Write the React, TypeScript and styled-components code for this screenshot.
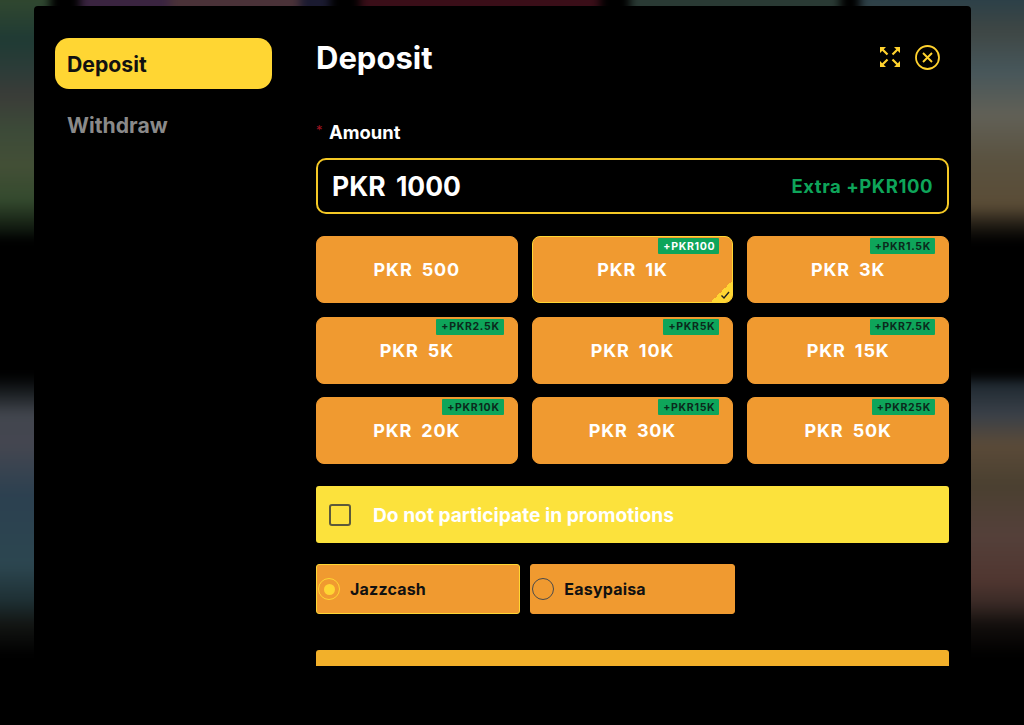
import styled, { createGlobalStyle } from 'styled-components'

const GlobalStyle = createGlobalStyle`
  html, body {
    margin: 0;
    height: 100%;
    overflow: hidden;
    background: #000;
    font-family: Inter, "Liberation Sans", sans-serif;
  }
`

const Backdrop = styled.div`
  position: absolute;
  inset: -20px -20px 0;
  display: flex;
  flex-direction: column;
  gap: 135px;
  overflow: hidden;
`

const TileRow = styled.div<{ $height: number; $spread?: boolean }>`
  display: flex;
  justify-content: ${(props) => (props.$spread ? 'space-between' : 'flex-start')};
  height: ${(props) => props.$height}px;
  filter: blur(5px);
  flex-shrink: 0;
`

const Tile = styled.div<{ $width: number; $bg: string }>`
  flex: 0 0 ${(props) => props.$width}px;
  background: ${(props) => props.$bg};
`

const Modal = styled.div`
  position: relative;
  display: flex;
  box-sizing: border-box;
  width: 937px;
  height: 719px;
  margin: 6px 0 0 34px;
  padding: 32px 22px 0 21px;
  background: #000;
  border-radius: 4px;
`

const Aside = styled.aside`
  flex: 0 0 217px;
  margin-right: 44px;
`

const AsideItem = styled.div<{ $active?: boolean }>`
  display: flex;
  align-items: center;
  height: 51px;
  padding-left: 12px;
  margin-bottom: 10px;
  border-radius: 14px;
  font-size: 21.2px;
  font-weight: 700;
  background: ${(props) => (props.$active ? '#ffd633' : 'transparent')};
  color: ${(props) => (props.$active ? '#111' : '#8a8a8a')};
`

const Main = styled.main`
  flex: 1;
  height: 628px;
  overflow: hidden;
`

const Header = styled.div`
  display: flex;
  align-items: center;
  justify-content: space-between;
  height: 38px;
`

const Title = styled.h1`
  margin: 0;
  font-size: 31px;
  font-weight: 700;
  color: #fff;
`

const HeaderIcons = styled.div`
  display: flex;
  align-items: center;
  gap: 14px;
  margin-right: 9px;
`

const Label = styled.div`
  display: flex;
  align-items: center;
  height: 24px;
  margin-top: 44px;
  font-size: 18.4px;
  font-weight: 700;
  color: #fff;
`

const Star = styled.span`
  width: 13px;
  font-size: 13px;
  font-weight: 400;
  color: #a01420;
  margin-top: -4px;
`

const AmountBox = styled.div`
  display: flex;
  align-items: center;
  justify-content: space-between;
  box-sizing: border-box;
  height: 56px;
  margin-top: 14px;
  padding: 0 14px;
  border: 2px solid #f5c925;
  border-radius: 10px;
`

const AmountValue = styled.span`
  font-size: 26.5px;
  font-weight: 700;
  color: #fff;
  word-spacing: 4px;
`

const Extra = styled.span`
  font-size: 18.5px;
  font-weight: 700;
  color: #0ea55a;
  letter-spacing: 0.55px;
`

const AmountGrid = styled.div`
  display: grid;
  grid-template-columns: repeat(3, 1fr);
  grid-auto-rows: 67px;
  gap: 13.5px 14px;
  margin-top: 22px;
`

const AmountCard = styled.div<{ $selected?: boolean }>`
  position: relative;
  display: flex;
  align-items: center;
  justify-content: center;
  box-sizing: border-box;
  overflow: hidden;
  border: 1px solid ${(props) => (props.$selected ? '#ffd633' : '#f09a30')};
  border-radius: 8px;
  background: #f09a30;
  color: #fff;
  font-size: 18px;
  font-weight: 700;
  letter-spacing: 0.85px;
  word-spacing: 4px;
`

const Badge = styled.span<{ $selected?: boolean }>`
  position: absolute;
  top: 1px;
  right: 13px;
  display: flex;
  align-items: center;
  height: 16px;
  padding: 0 4px 0 5px;
  border-radius: 1px;
  background: #0ea55a;
  color: ${(props) => (props.$selected ? '#fff' : '#0b2a1c')};
  font-size: 10.5px;
  font-weight: 700;
  letter-spacing: 0.7px;
  word-spacing: 0;
`

const Corner = styled.span`
  position: absolute;
  right: 0;
  bottom: 0;
  width: 21px;
  height: 21px;
  background: linear-gradient(135deg, transparent 50%, #ffd633 50%);
`

const CornerCheck = styled.svg`
  position: absolute;
  right: 2px;
  bottom: 2px;
  width: 10px;
  height: 10px;
`

const Promo = styled.div`
  display: flex;
  align-items: center;
  gap: 22px;
  height: 57px;
  margin-top: 22px;
  padding-left: 13px;
  border-radius: 3px;
  background: #fce23c;
  color: #fff;
  font-size: 19.2px;
  font-weight: 700;
`

const CheckBox = styled.span`
  box-sizing: border-box;
  width: 22px;
  height: 22px;
  border: 2px solid #5c5a3a;
  border-radius: 3px;
`

const PayRow = styled.div`
  display: grid;
  grid-template-columns: repeat(3, 1fr);
  gap: 10px;
  margin-top: 21px;
`

const PayCard = styled.div<{ $selected?: boolean }>`
  display: flex;
  align-items: center;
  gap: 10px;
  box-sizing: border-box;
  height: 50px;
  border: 1px solid ${(props) => (props.$selected ? '#ffd633' : '#f09a30')};
  border-radius: 3px;
  background: #f09a30;
  color: #111;
  font-size: 16px;
  font-weight: 700;
  letter-spacing: 0.2px;
`

const Radio = styled.span<{ $selected?: boolean }>`
  display: flex;
  align-items: center;
  justify-content: center;
  box-sizing: border-box;
  width: 22px;
  height: 22px;
  margin-left: 1px;
  border: 1.5px solid ${(props) => (props.$selected ? '#ffd633' : '#4a4a4a')};
  border-radius: 50%;
`

const RadioDot = styled.span`
  width: 11px;
  height: 11px;
  border-radius: 50%;
  background: #ffd633;
`

const SubmitBar = styled.div`
  height: 50px;
  margin-top: 36px;
  border-radius: 3px;
  background: #f2b02a;
`

const amounts = [
  { label: 'PKR 500' },
  { label: 'PKR 1K', bonus: '+PKR100', selected: true },
  { label: 'PKR 3K', bonus: '+PKR1.5K' },
  { label: 'PKR 5K', bonus: '+PKR2.5K' },
  { label: 'PKR 10K', bonus: '+PKR5K' },
  { label: 'PKR 15K', bonus: '+PKR7.5K' },
  { label: 'PKR 20K', bonus: '+PKR10K' },
  { label: 'PKR 30K', bonus: '+PKR15K' },
  { label: 'PKR 50K', bonus: '+PKR25K' },
]

const fade = (stops: string) => `linear-gradient(180deg, ${stops})`

const ExpandIcon = () => (
  <svg width="22" height="22" viewBox="0 0 22 22" fill="none">
    <path
      d="M3.5 3.5l5 5M18.5 3.5l-5 5M3.5 18.5l5-5M18.5 18.5l-5-5"
      stroke="#ffd22e"
      strokeWidth="2.2"
    />
    <path
      d="M1 1h6L1 7zM21 1h-6L21 7zM1 21h6L1 15zM21 21h-6L21 15z"
      fill="#ffd22e"
    />
  </svg>
)

const CloseIcon = () => (
  <svg width="25" height="25" viewBox="0 0 25 25" fill="none" stroke="#ffd22e">
    <circle cx="12.5" cy="12.5" r="11.5" strokeWidth="1.8" />
    <path d="M8 8l9 9M17 8l-9 9" strokeWidth="1.9" />
  </svg>
)

const App = () => {
  return (
    <>
      <GlobalStyle />
      <Backdrop>
        <TileRow $height={260}>
          <Tile
            $width={70}
            $bg={fade(
              '#30472f 20px, #1f3a34 60px, #2c3c38 90px, #3a3c38 115px, #3c4a38 150px, #434f36 185px, #344a2e 220px, #0c140c 252px, #000 260px'
            )}
          />
          <Tile $width={30} $bg="#000" />
          <Tile $width={90} $bg="#3a2440" />
          <Tile $width={130} $bg="#4a3238" />
          <Tile $width={30} $bg="#1a1a30" />
          <Tile $width={30} $bg="#000" />
          <Tile $width={240} $bg="#3a0e18" />
          <Tile $width={30} $bg="#000" />
          <Tile $width={210} $bg="#2a3a34" />
          <Tile $width={20} $bg="#000" />
          <Tile
            $width={184}
            $bg={fade(
              '#2c4048 20px, #3e4644 50px, #46565a 90px, #616056 135px, #5a5240 180px, #5a4c36 225px, #1a1610 248px, #000 262px'
            )}
          />
        </TileRow>
        <TileRow $height={280} $spread>
          <Tile
            $width={70}
            $bg={fade(
              '#000 0, #15191c 15px, #42464e 40px, #444650 70px, #2c4050 120px, #2c4650 190px, #1e3034 225px, #121412 250px, #000 280px'
            )}
          />
          <Tile
            $width={110}
            $bg={fade(
              '#000 0, #202a32 10px, #3a4048 40px, #5a4a38 70px, #4a4030 110px, #54403a 160px, #503630 205px, #3a2a26 228px, #120e0c 250px, #000 280px'
            )}
          />
        </TileRow>
      </Backdrop>
      <Modal>
        <Aside>
          <AsideItem $active>Deposit</AsideItem>
          <AsideItem>Withdraw</AsideItem>
        </Aside>
        <Main>
          <Header>
            <Title>Deposit</Title>
            <HeaderIcons>
              <ExpandIcon />
              <CloseIcon />
            </HeaderIcons>
          </Header>
          <Label>
            <Star>*</Star>
            Amount
          </Label>
          <AmountBox>
            <AmountValue>PKR 1000</AmountValue>
            <Extra>Extra +PKR100</Extra>
          </AmountBox>
          <AmountGrid>
            {amounts.map((item) => (
              <AmountCard key={item.label} $selected={item.selected}>
                {item.label}
                {item.bonus && <Badge $selected={item.selected}>{item.bonus}</Badge>}
                {item.selected && (
                  <Corner>
                    <CornerCheck viewBox="0 0 10 10" fill="none" stroke="#222" strokeWidth="1.4">
                      <path d="M1.5 5.5l2.5 2.5 5-6" />
                    </CornerCheck>
                  </Corner>
                )}
              </AmountCard>
            ))}
          </AmountGrid>
          <Promo>
            <CheckBox />
            Do not participate in promotions
          </Promo>
          <PayRow>
            <PayCard $selected>
              <Radio $selected>
                <RadioDot />
              </Radio>
              Jazzcash
            </PayCard>
            <PayCard>
              <Radio />
              Easypaisa
            </PayCard>
          </PayRow>
          <SubmitBar />
        </Main>
      </Modal>
    </>
  )
}

export default App
